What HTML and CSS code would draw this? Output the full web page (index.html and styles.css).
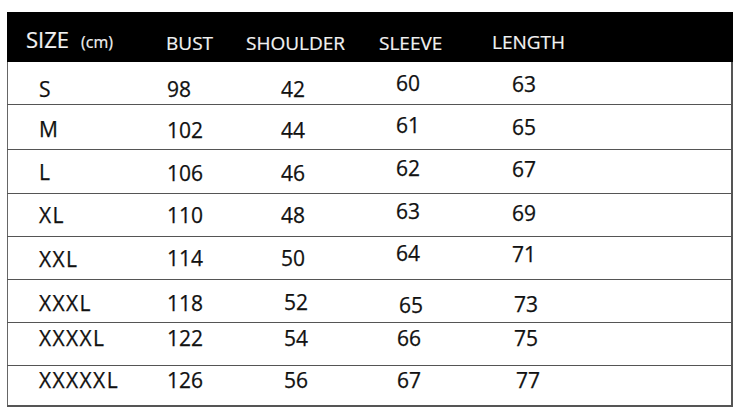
FILE: index.html
```html
<!DOCTYPE html>
<html lang="en">
<head>
<meta charset="utf-8">
<title>Size chart</title>
<link rel="stylesheet" href="styles.css">
</head>
<body>
<div class="chart">
  <div class="head">
    <div class="h h1"><span class="size">SIZE</span><span class="unit">(cm)</span></div>
    <div class="h">BUST</div>
    <div class="h">SHOULDER</div>
    <div class="h">SLEEVE</div>
    <div class="h h5">LENGTH</div>
  </div>
  <div class="body">
    <div class="row r1"><div class="c">S</div><div class="c">98</div><div class="c">42</div><div class="c">60</div><div class="c">63</div></div>
    <div class="row r2"><div class="c">M</div><div class="c">102</div><div class="c">44</div><div class="c">61</div><div class="c">65</div></div>
    <div class="row r3"><div class="c">L</div><div class="c">106</div><div class="c">46</div><div class="c">62</div><div class="c">67</div></div>
    <div class="row r4"><div class="c">XL</div><div class="c">110</div><div class="c">48</div><div class="c">63</div><div class="c">69</div></div>
    <div class="row r5"><div class="c">XXL</div><div class="c">114</div><div class="c">50</div><div class="c">64</div><div class="c">71</div></div>
    <div class="row r6"><div class="c">XXXL</div><div class="c">118</div><div class="c">52</div><div class="c">65</div><div class="c">73</div></div>
    <div class="row r7"><div class="c">XXXXL</div><div class="c">122</div><div class="c">54</div><div class="c">66</div><div class="c">75</div></div>
    <div class="row r8"><div class="c">XXXXXL</div><div class="c">126</div><div class="c">56</div><div class="c">67</div><div class="c">77</div></div>
  </div>
</div>
</body>
</html>
```
FILE: styles.css
```css
html, body {
  margin: 0;
  background: #fff;
}
body {
  font-family: "Open Sans", "Liberation Sans", sans-serif;
}
.chart {
  width: 726px;
  margin: 12px 0 0 7px;
}
.head,
.row {
  display: grid;
  grid-template-columns: 160px 80px 133px 113px 1fr;
  align-items: start;
}
.head {
  height: 50px;
  background: #000;
  color: #f2f2f2;
}
.h {
  font-size: 19px;
  line-height: 1;
  padding-top: 22px;
  margin-left: -1px;
  -webkit-text-stroke: 0.2px currentColor;
}
.h5 {
  padding-top: 21px;
}
.h1 {
  font-size: 22px;
  padding-top: 16px;
  padding-left: 19px;
  margin-left: 0;
  white-space: nowrap;
}
.unit {
  font-size: 16px;
  margin-left: 12px;
}
.body {
  display: grid;
  grid-template-rows: 43px 45px 44px 43px 43px 43px 43px 39px;
  box-shadow: inset 1px 0 #666, inset -2px 0 #555;
  border-bottom: 2px solid #555;
}
.row {
  border-bottom: 1px solid #555;
  color: #111;
}
.row.r8 {
  border-bottom: none;
}
.c {
  font-size: 21px;
  line-height: 1;
  white-space: nowrap;
  -webkit-text-stroke: 0.25px currentColor;
}
.c:nth-child(1) { padding-left: 32px; letter-spacing: 1.4px; }
.c:nth-child(2) { padding-left: 0; }
.c:nth-child(3) { padding-left: 34px; }
.c:nth-child(4) { padding-left: 16px; }
.c:nth-child(5) { padding-left: 19px; }

.r1 .c { padding-top: 17px; }
.r1 .c:nth-child(4) { padding-top: 11px; }
.r1 .c:nth-child(5) { padding-top: 12px; }

.r2 .c { padding-top: 15px; }
.r2 .c:nth-child(1) { padding-top: 14px; }
.r2 .c:nth-child(4) { padding-top: 10px; }
.r2 .c:nth-child(5) { padding-top: 12px; }

.r3 .c { padding-top: 13px; }
.r3 .c:nth-child(1) { padding-top: 12px; }
.r3 .c:nth-child(4) { padding-top: 8px; }
.r3 .c:nth-child(5) { padding-top: 9px; }

.r4 .c { padding-top: 11px; }
.r4 .c:nth-child(4) { padding-top: 7px; }
.r4 .c:nth-child(5) { padding-top: 9px; }

.r5 .c { padding-top: 11px; }
.r5 .c:nth-child(1) { padding-top: 12px; }
.r5 .c:nth-child(4) { padding-top: 6px; }
.r5 .c:nth-child(5) { padding-top: 7px; }

.r6 .c { padding-top: 13px; }
.r6 .c:nth-child(3) { padding-top: 12px; padding-left: 37px; }
.r6 .c:nth-child(4) { padding-top: 15px; padding-left: 19px; }
.r6 .c:nth-child(5) { padding-top: 14px; padding-left: 21px; }

.r7 .c { padding-top: 5px; }
.r7 .c:nth-child(3) { padding-left: 37px; }
.r7 .c:nth-child(4) { padding-left: 17px; }
.r7 .c:nth-child(5) { padding-left: 21px; }

.r8 .c { padding-top: 4px; }
.r8 .c:nth-child(3) { padding-left: 37px; }
.r8 .c:nth-child(4) { padding-left: 17px; }
.r8 .c:nth-child(5) { padding-left: 23px; }
```
